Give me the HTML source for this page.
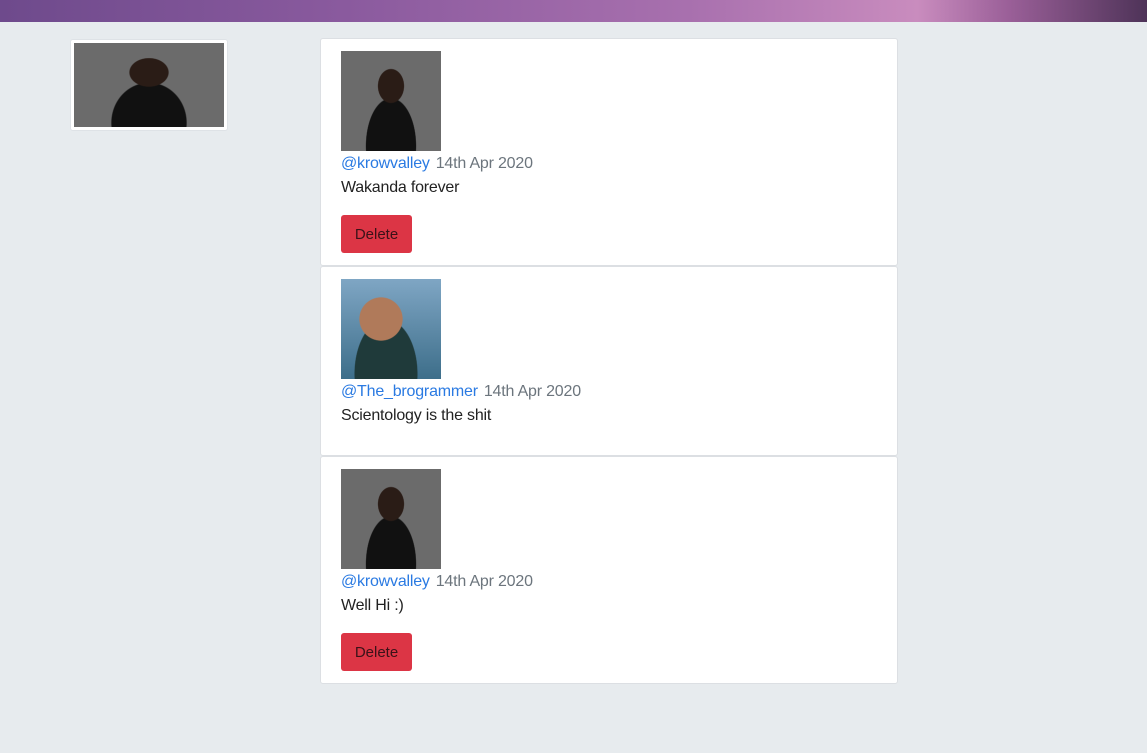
<!DOCTYPE html>
<html><head><style>
body{margin:0;background:#e7ebee;font-family:"Liberation Sans",sans-serif;width:1147px;height:753px;overflow:hidden;position:relative}
.hdr{position:absolute;left:0;top:0;width:1147px;height:22px;background:linear-gradient(90deg,#6e4a8c 0%,#8a5a9e 30%,#a870ae 60%,#c98cbe 80%,#9a5f98 88%,#4e3358 100%)}
.thumb{position:absolute;left:70px;top:39px;width:150px;height:84px;padding:3px;background:#fff;border-radius:3px;border:1px solid #dee2e6}
.pic{background:radial-gradient(ellipse at 50% 35%,#2a1c16 0 18%,transparent 19%),radial-gradient(ellipse at 50% 95%,#111 0 35%,transparent 36%),#6b6b6b}
.pic2{background:radial-gradient(ellipse at 40% 40%,#b07a5a 0 25%,transparent 26%),radial-gradient(ellipse at 45% 95%,#1f3a3a 0 40%,transparent 41%),linear-gradient(#7fa6c4,#3d6e8a)}
.card{position:absolute;left:320px;width:576px;background:#fff;border:1px solid #dcdfe3;border-radius:3px}
.card .img{position:absolute;left:20px;top:12px;width:100px;height:100px}
.meta{position:absolute;left:20px;top:116px;font-size:16px;color:#6c757d;letter-spacing:-0.2px}
.meta a{color:#2a7ae2;margin-right:6px}
.txt{position:absolute;left:20px;top:140px;font-size:16px;color:#222;letter-spacing:-0.2px}
.btn{position:absolute;left:20px;top:176px;width:71px;height:38px;background:#dc3545;border-radius:3px;color:#3a1218;font-size:15px;line-height:40px;text-align:center}
</style></head><body>
<div class="hdr"></div>
<div class="thumb"><div class="pic" style="width:150px;height:84px"></div></div>
<div class="card" style="top:38px;height:226px"><div class="img pic"></div><div class="meta"><a>@krowvalley</a>14th Apr 2020</div><div class="txt">Wakanda forever</div><div class="btn">Delete</div></div>
<div class="card" style="top:266px;height:188px"><div class="img pic2"></div><div class="meta"><a>@The_brogrammer</a>14th Apr 2020</div><div class="txt">Scientology is the shit</div></div>
<div class="card" style="top:456px;height:226px"><div class="img pic"></div><div class="meta"><a>@krowvalley</a>14th Apr 2020</div><div class="txt">Well Hi :)</div><div class="btn">Delete</div></div>
</body></html>
